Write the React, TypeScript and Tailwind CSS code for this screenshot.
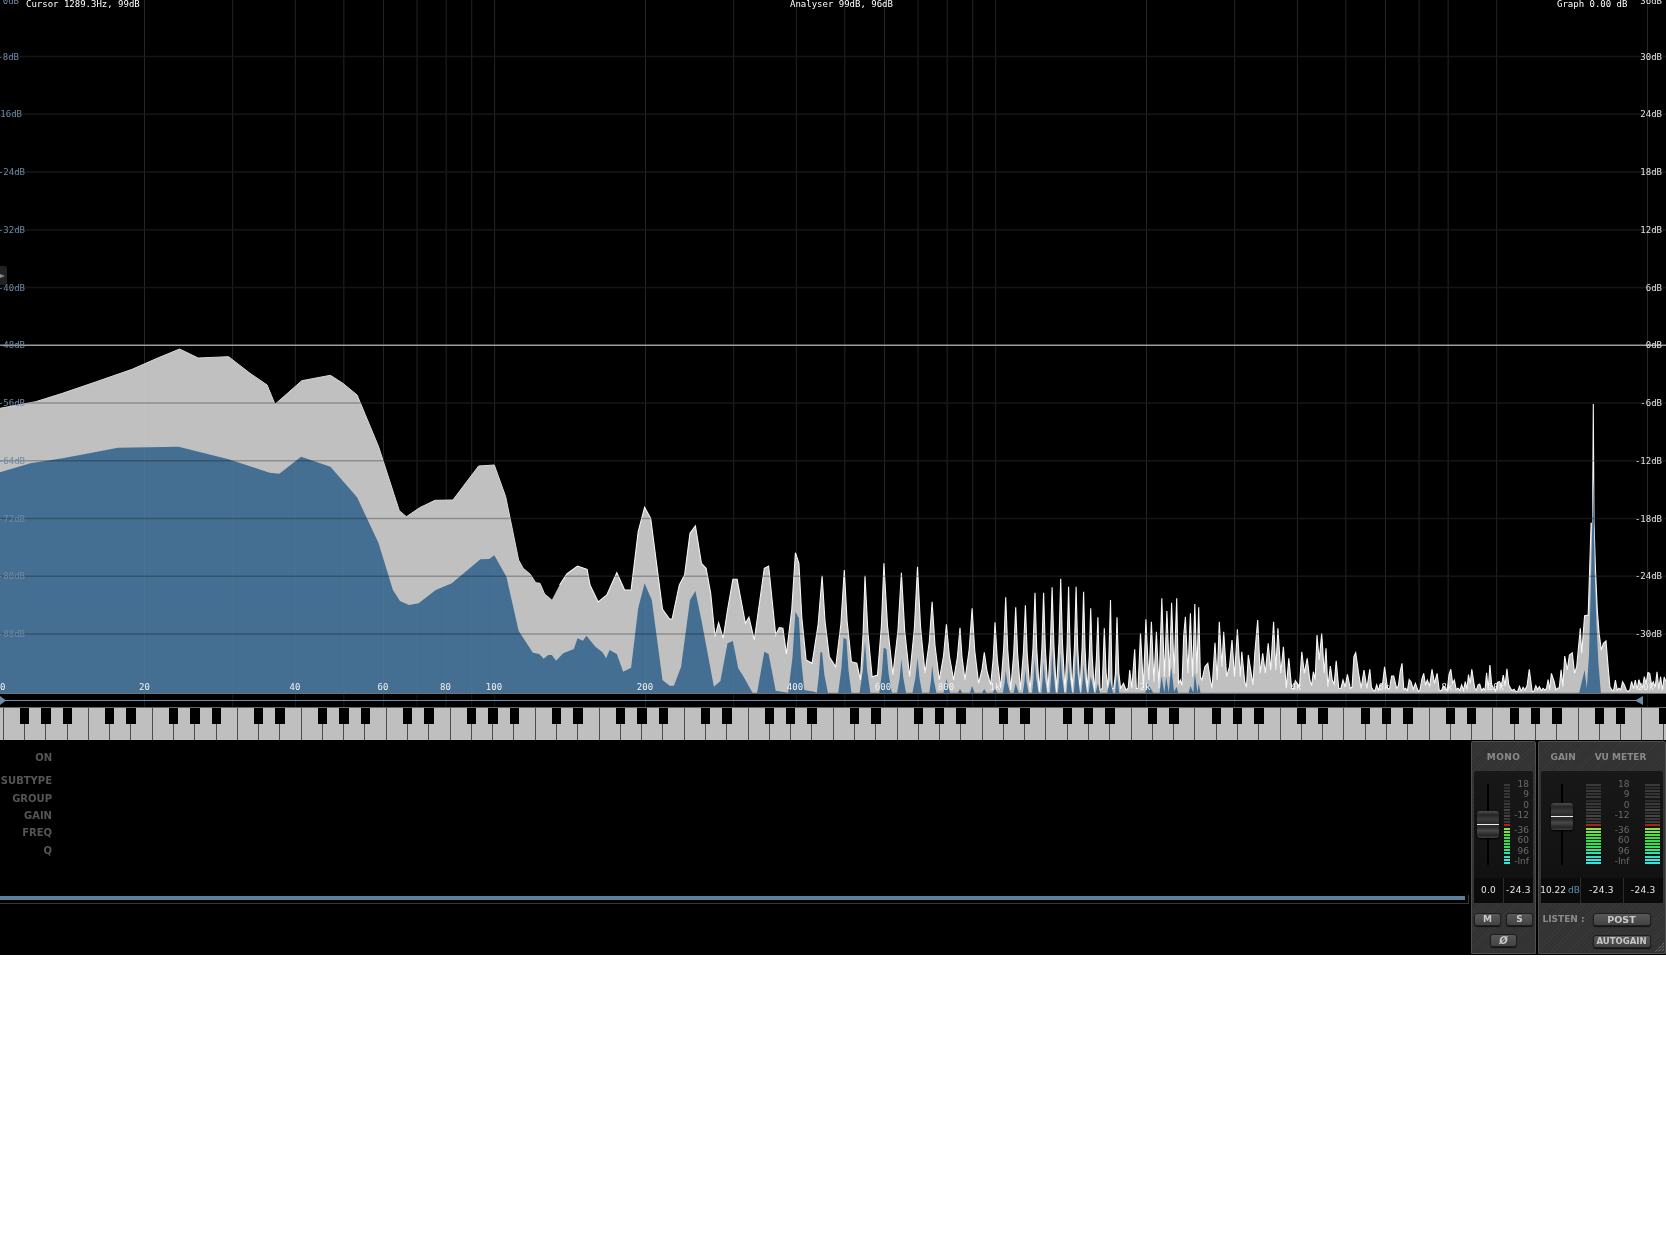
import React from "react";

// traced from crops of the spectrum: each run has its own offset and scale
type Pt = [number, number];
const run = (pts: Pt[], ox: number, oy: number, sx: number) =>
  pts.map(([x, y]) => `${(ox + x / sx).toFixed(1)},${(oy + y / 3).toFixed(1)}`);

// bell-shaped flanks: add a midpoint pulled towards the higher end of each steep segment
const sharpen = (pts: Pt[]) => {
  const out: Pt[] = [];
  pts.forEach((p, i) => {
    out.push(p);
    const q = pts[i + 1];
    if (!q || p[0] < 690 || Math.abs(q[1] - p[1]) < 60) return;
    const [hi, lo] = p[1] < q[1] ? [p, q] : [q, p];
    out.push([hi[0] + (lo[0] - hi[0]) * 0.4, (p[1] + q[1]) / 2 + Math.abs(q[1] - p[1]) * 0.06]);
  });
  return out;
};

// comb of fine noise between traced peaks of the top octaves
const comb = (pts: Pt[], base: number) => {
  const out: Pt[] = [];
  pts.forEach((p, i) => {
    out.push(p);
    const q = pts[i + 1];
    if (!q || q[0] - p[0] < 9 || (p[0] > 1300 && p[0] < 1400)) return;
    const steps = Math.floor((q[0] - p[0]) / 4.5);
    for (let s = 1; s < steps; s++) {
      const t = s / steps;
      const env = p[1] + (q[1] - p[1]) * t;
      const r = Math.abs(Math.sin((p[0] + s) * 12.9898) * 43758.5453) % 1;
      const y = s % 2 ? env + (base - env) * (0.45 + r * 0.5) : env - r * 14;
      out.push([p[0] + (q[0] - p[0]) * t, Math.min(y, base)]);
    }
  });
  return out;
};

const whiteLow: Pt[] = [[0,205],[100,185],[175,160],[270,125],[370,88],[440,55],[503,27],[555,54],[640,50],[700,100],[748,135],[770,193],[845,122],[925,106],[960,130],[1000,165],[1060,320],[1118,512],[1138,530],[1175,503],[1218,481],[1268,480],[1340,378],[1384,375],[1416,470],[1452,660],[1465,685],[1485,703],[1500,728],[1512,730],[1525,762],[1545,780]];
const whiteMid: Pt[] = [[55,315],[75,282],[105,258],[132,268],[140,315],[163,366],[187,345],[215,278],[237,330],[255,330],[275,155],[293,82],[310,115],[325,240],[343,388],[363,417],[370,417],[390,315],[405,285],[420,160],[435,138],[452,250],[465,265],[478,340],[490,470],[500,428],[513,475],[525,390],[540,298],[552,298],[575,430],[585,412],[600,480],[628,265],[640,258],[660,465],[670,443],[680,445],[690,522],[715,218],[725,250],[745,540],[762,550],[790,287],[810,530],[828,560],[852,270],[872,545],[887,550],[897,600],[910,287],[930,590],[945,585],[963,250],[988,585],[1012,278],[1035,590],[1057,260],[1078,580],[1098,365],[1118,600],[1138,433],[1158,600],[1176,443],[1190,600],[1210,385],[1228,610],[1244,517],[1262,615],[1274,427],[1290,625],[1304,352],[1318,630],[1332,382],[1345,630],[1359,376],[1372,635],[1386,338],[1398,635],[1410,338],[1422,635],[1434,322],[1446,635],[1458,296],[1470,635],[1480,320],[1490,635],[1501,320],[1512,635],[1522,335],[1532,635],[1542,385],[1552,635],[1562,412]];
const whiteHigh: Pt[] = [[0,930],[12,745],[22,925],[29,660],[38,925],[47,712],[57,925],[65,910],[78,925],[82,870],[88,925],[96,808],[105,925],[112,760],[120,925],[127,718],[135,900],[142,725],[149,905],[156,755],[163,925],[171,655],[178,890],[185,693],[192,890],[198,668],[205,880],[212,655],[222,900],[236,710],[243,880],[250,700],[256,890],[262,672],[268,880],[273,682],[282,900],[290,860],[298,850],[305,900],[310,925],[318,788],[324,900],[330,725],[337,860],[342,755],[350,890],[358,860],[365,780],[372,890],[380,748],[388,890],[392,815],[400,905],[410,825],[418,880],[428,820],[436,720],[443,880],[450,820],[457,880],[465,790],[472,870],[480,725],[486,870],[492,745],[500,880],[507,800],[515,925],[522,835],[530,925],[545,910],[558,815],[565,880],[573,835],[580,900],[590,875],[600,765],[606,840],[613,760],[620,880],[625,805],[630,920],[637,858],[642,900],[653,842],[660,925],[672,900],[684,883],[692,925],[702,830],[707,818],[715,880],[722,925],[730,870],[738,925],[746,868],[755,930],[775,915],[787,860],[795,925],[812,888],[820,925],[835,850],[845,925],[860,905],[872,910],[880,935],[895,880],[905,900],[918,868],[925,910],[932,880],[938,930],[955,925],[970,868],[980,900],[990,925],[1010,905],[1028,868],[1036,925],[1050,912],[1060,925],[1078,855],[1088,925],[1105,905],[1115,885],[1125,866],[1135,925],[1150,935],[1175,930],[1187,868],[1195,935],[1215,920],[1230,930],[1248,880],[1256,905],[1265,925],[1285,828],[1292,870],[1298,825],[1306,818],[1312,880],[1318,860],[1328,745],[1332,820],[1340,707],[1350,705],[1358,430],[1362,430],[1364,72],[1366,430],[1370,570],[1375,690],[1380,760],[1386,810],[1392,790],[1399,783],[1405,860],[1415,930],[1425,900],[1435,925],[1450,915],[1460,935],[1480,900],[1495,915],[1505,890],[1520,880],[1530,905],[1540,875],[1550,890],[1565,905]];

const blueLow: Pt[] = [[0,397],[85,370],[175,355],[250,340],[330,323],[500,320],[640,358],[755,398],[782,401],[843,350],[925,380],[1000,472],[1060,610],[1100,750],[1120,783],[1145,795],[1172,790],[1220,750],[1265,730],[1345,658],[1370,657],[1384,646],[1418,710],[1452,872],[1492,938],[1510,942],[1522,956],[1535,945],[1545,945],[1557,962]];
const blueMid: Pt[] = [[65,520],[95,507],[105,475],[120,482],[130,467],[155,500],[175,517],[185,535],[195,510],[215,522],[233,575],[255,563],[275,385],[293,310],[313,360],[343,600],[363,617],[375,617],[395,560],[420,360],[435,333],[452,420],[487,620],[505,603],[525,490],[540,483],[555,565],[570,590],[595,638],[608,638],[628,515],[640,522],[660,632],[695,638],[715,395],[725,415],[740,630],[768,635],[775,638],[785,517],[790,517],[806,638],[835,638],[850,473],[858,478],[872,638],[895,638],[910,483],[925,638],[950,638],[962,503],[970,507],[985,638],[1000,638],[1012,537],[1025,638],[1043,638],[1057,533],[1070,638],[1090,638],[1098,555],[1110,638],[1130,638],[1138,597],[1148,638],[1170,638],[1176,627],[1182,638],[1204,638],[1210,617],[1217,638],[1238,638],[1244,627],[1250,638],[1268,638],[1274,625],[1280,638],[1296,638],[1304,570],[1316,638],[1326,638],[1332,610],[1340,638],[1352,638],[1359,567],[1368,638],[1378,638],[1385,537],[1396,638],[1404,638],[1410,543],[1420,638],[1428,638],[1434,505],[1444,638],[1450,638],[1457,517],[1468,638],[1474,638],[1480,543],[1490,638],[1495,638],[1501,508],[1512,638],[1516,638],[1522,550],[1532,638],[1536,638],[1542,588],[1552,638],[1556,638],[1562,610],[1568,638]];
const blueHigh: Pt[] = [[20,938],[28,900],[36,938],[42,938],[47,880],[53,938],[125,938],[132,910],[147,938],[165,938],[170,888],[178,938],[183,890],[190,938],[197,860],[205,935],[212,920],[216,938],[245,938],[250,918],[258,938],[262,878],[270,938],[273,910],[278,938],[1325,938],[1340,870],[1346,925],[1352,825],[1358,585],[1364,290],[1368,585],[1373,740],[1378,850],[1385,938]];

// the low bumps have a soft edge, the narrow peaks a bright one
const softEdge = run(whiteLow, 0, 340, 2.8).join(" ");
const brightEdge = [...run(sharpen(whiteMid), 540, 480, 2.8), ...run(comb(whiteHigh, 934), 1100, 380, 2.765)].join(" ");
const whiteLine = `${softEdge} ${brightEdge}`;
const blueLine = [...run(blueLow, 0, 340, 2.8), ...run(sharpen(blueMid), 540, 480, 2.8), ...run(blueHigh, 1100, 380, 2.765)].join(" ");

const freqX = (f: number) => 144.5 + 501 * Math.log10(f / 20);
const gridFreqs = [20,30,40,50,60,70,80,90,100,200,300,400,500,600,700,800,900,1000,2000,3000,4000,5000,6000,7000,8000,10000,20000];
const freqLabels: [string, number][] = [["10",0],["20",144.5],["40",295],["60",383],["80",445.5],["100",494],["200",645],["400",795],["600",883],["800",946],["1k",995],["2k",1145],["4k",1296],["6k",1384],["8k",1447],["10k",1496],["20k",1646]];

const rowY = (i: number) => 56.5 + (i - 1) * 57.75;
const leftLabels = ["0dB","-8dB","-16dB","-24dB","-32dB","-40dB","-48dB","-56dB","-64dB","-72dB","-80dB","-88dB"];
const leftEnds = [19,19,22,25,25,25,25,25,25,25,25,25];
const rightLabels = ["36dB","30dB","24dB","18dB","12dB","6dB","0dB","-6dB","-12dB","-18dB","-24dB","-30dB"];

function Spectrum() {
  return (
    <svg width={1666} height={707} viewBox="0 0 1666 707" className="block font-['DejaVu_Sans_Mono',monospace]">
      {gridFreqs.map((f) => (
        <line key={f} x1={freqX(f)} x2={freqX(f)} y1={0} y2={693} stroke="#fff" strokeOpacity={0.12} />
      ))}
      {leftLabels.map((_, i) =>
        i === 0 || i === 6 ? null : (
          <line key={i} x1={0} x2={1666} y1={rowY(i)} y2={rowY(i)} stroke="#1b1b1b" strokeWidth={1.5} />
        )
      )}
      <polygon points={`0,693 ${whiteLine} 1666,693`} fill="#c0c0c0" />
      <polyline points={softEdge} fill="none" stroke="#d8d8d8" strokeWidth={1} />
      <polyline points={brightEdge} fill="none" stroke="#f6f6f6" strokeWidth={1.1} />
      <polygon points={`0,693 ${blueLine} 1666,693`} fill="#446f92" />
      {gridFreqs.map((f) => (
        <line key={f} x1={freqX(f)} x2={freqX(f)} y1={0} y2={693} stroke="#fff" strokeOpacity={0.03} />
      ))}
      {leftLabels.map((_, i) =>
        i === 0 || i === 6 ? null : (
          <line key={i} x1={0} x2={1666} y1={rowY(i)} y2={rowY(i)} stroke="#2a2a2a" strokeOpacity={0.31} strokeWidth={1.5} style={{ mixBlendMode: "multiply" }} />
        )
      )}
      <line x1={0} x2={1666} y1={rowY(6)} y2={rowY(6)} stroke="#9c9c9c" strokeWidth={1.5} />
      {leftLabels.map((t, i) => (
        <text key={t} x={leftEnds[i]} y={i === 0 ? 1 : rowY(i)} textAnchor="end" dominantBaseline="central" fontSize={9} fill="#6d8aa6">{t}</text>
      ))}
      {rightLabels.map((t, i) => (
        <text key={t} x={1662} y={i === 0 ? 1 : rowY(i)} textAnchor="end" dominantBaseline="central" fontSize={9} fill="#e4e4e4">{t}</text>
      ))}
      {freqLabels.map(([t, x]) => (
        <text key={t} x={x} y={687} textAnchor="middle" dominantBaseline="central" fontSize={9} fill="#f2f2f2">{t}</text>
      ))}
      <text x={26} y={4} dominantBaseline="central" fontSize={9} fill="#fff">Cursor 1289.3Hz, 99dB</text>
      <text x={790} y={4} dominantBaseline="central" fontSize={9} fill="#fff">Analyser 99dB, 96dB</text>
      <text x={1557} y={4} dominantBaseline="central" fontSize={9} fill="#fff">Graph 0.00 dB</text>
      <rect x={0} y={693} width={1666} height={14} fill="#000" />
      {gridFreqs.map((f) => (
        <line key={f} x1={freqX(f)} x2={freqX(f)} y1={694} y2={707} stroke="#fff" strokeOpacity={0.1} />
      ))}
      <line x1={0} x2={1666} y1={693.5} y2={693.5} stroke="#727272" />
      <line x1={0} x2={1640} y1={700.5} y2={700.5} stroke="#6b8cab" />
      <polygon points="0,696 0,705 6,700.5" fill="#6b8cab" />
      <polygon points="1643,696 1643,705 1635,700.5" fill="#6b8cab" />
    </svg>
  );
}

// first visible edge has no black key, then 3 blacks, a gap, 2 blacks, a gap
const hasBlack = [false, true, true, true, false, true, true];

function Keyboard() {
  const keys = Array.from({ length: 80 }, (_, i) => i);
  return (
    <div className="h-[33px] overflow-hidden border-t border-[#666] bg-black">
      <div className="flex h-[32px] -ml-[17.6px] w-[1720px]">
        {keys.map((i) => (
          <div key={i} className="relative h-full w-[21.29px] shrink-0 border-r-[1.5px] border-[#4c4c4c] bg-[#bfbfbf]">
            {hasBlack[i % 7] && <div className="absolute -right-[5.4px] top-0 z-10 h-[16px] w-[9.3px] bg-black" />}
          </div>
        ))}
      </div>
    </div>
  );
}

const segments = [
  "bg-[#3a3a3a]","bg-[#2e2e2e]","bg-[#3a3a3a]","bg-[#333333]","bg-[#3a3a3a]","bg-[#2e2e2e]","bg-[#3a3a3a]","bg-[#333333]","bg-[#444444]","bg-[#333333]","bg-[#444444]","bg-[#3a3a3a]","bg-[#3a3a3a]",
  "bg-[#a82222]",
  "bg-[#8fe23c]","bg-[#7fe23c]","bg-[#4fe23c]",
  "bg-[#2ee244]","bg-[#2ee244]","bg-[#2ee244]","bg-[#2ee25a]",
  "bg-[#2ee28c]","bg-[#2ee2a8]","bg-[#2ee2c4]","bg-[#2ee8d8]","bg-[#2ee8e0]",
];

function Meter({ wide }: { wide?: boolean }) {
  return (
    <div className={wide ? "flex h-[80px] w-[15px] shrink-0 flex-col justify-between" : "flex h-[80px] w-[5.5px] shrink-0 flex-col justify-between"}>
      {segments.map((c, i) => (
        <div key={i} className={`h-[2px] ${c}`} />
      ))}
    </div>
  );
}

function Scale() {
  const rows = ["18", "9", "0", "-12", "-36", "60", "96", "-Inf"];
  return (
    <div className="-mt-[5px] flex flex-col items-end font-['DejaVu_Sans',sans-serif] text-[9px] leading-[10.4px] text-[#6a6a6a]">
      {rows.map((t) => (
        <div key={t} className={t === "-36" ? "mt-[4.5px] h-[10.4px]" : "h-[10.4px]"}>{t}</div>
      ))}
    </div>
  );
}

function Fader({ top }: { top: string }) {
  return (
    <div className="relative flex h-[81px] w-[22px] shrink-0 justify-center">
      <div className="h-full w-[2px] bg-black" />
      <div className={`absolute left-0 flex h-[27px] w-[22px] items-center rounded-[3px] bg-[linear-gradient(#4e4e4e,#262626_14%,#3a3a3a_30%,#2a2a2a_46%,#2a2a2a_60%,#484848_72%,#262626_90%,#3e3e3e)] shadow-[0_1px_2px_#000] ${top}`}>
        <div className="h-[1.5px] w-full bg-[#eeeeee]" />
      </div>
    </div>
  );
}

function Readout({ className, children }: { className: string; children: React.ReactNode }) {
  return (
    <div className={`flex items-center justify-center whitespace-nowrap font-['DejaVu_Sans',sans-serif] text-[9px] tracking-[0.3px] text-[#e8e8e8] ${className}`}>
      {children}
    </div>
  );
}

function Btn({ className, children }: { className: string; children: React.ReactNode }) {
  return (
    <div className={`flex h-[13px] items-center justify-center rounded-[3px] border border-[#1e1e1e] bg-[linear-gradient(#585858,#434343)] font-['DejaVu_Sans',sans-serif] font-bold text-[#c8c8c8] shadow-[0_1px_1px_#111] ${className}`}>
      {children}
    </div>
  );
}

const panel = "relative flex h-[213px] shrink-0 flex-col rounded-t-[2px] border border-[#4e4e4e] bg-[repeating-linear-gradient(135deg,#383838_0px,#383838_1px,#323232_1px,#323232_3px)]";
const title = "font-['DejaVu_Sans',sans-serif] text-[9px] font-bold text-[#8a8a8a]";
const display = "flex flex-col rounded-[2px] bg-[linear-gradient(#181818,#101010)]";

function MonoPanel() {
  return (
    <div className={`${panel} ml-[5px] w-[65px]`}>
      <div className="flex h-[29px] items-center justify-center pt-[3px]">
        <span className={`${title} tracking-[0.4px]`}>MONO</span>
      </div>
      <div className={`${display} mx-[2px] h-[132px]`}>
        <div className="flex h-[107px] items-start pl-[3px] pr-[4px] pt-[13px]">
          <Fader top="top-[27px]" />
          <div className="ml-[5px]"><Meter /></div>
          <div className="flex-1"><Scale /></div>
        </div>
        <div className="flex h-[25px] bg-[#0b0b0b]">
          <Readout className="w-[30px] border-r border-[#2c2c2c]">0.0</Readout>
          <Readout className="flex-1">-24.3</Readout>
        </div>
      </div>
      <div className="mx-[2px] mt-[10px] flex justify-between">
        <Btn className="w-[27px] text-[9px]">M</Btn>
        <Btn className="w-[27px] text-[9px]">S</Btn>
      </div>
      <div className="mt-[8px] flex justify-center">
        <Btn className="w-[27px] text-[10px] italic">Ø</Btn>
      </div>
    </div>
  );
}

function MainPanel() {
  return (
    <div className={`${panel} ml-[1.5px] w-[128.5px]`}>
      <div className="flex h-[29px] items-center pt-[3px]">
        <span className={`${title} ml-[12px] w-[24px] text-center`}>GAIN</span>
        <span className={`${title} ml-[20px] w-[52px] whitespace-nowrap text-center`}>VU METER</span>
      </div>
      <div className={`${display} mx-[2px] h-[132px]`}>
        <div className="flex h-[107px] items-start pl-[10px] pt-[13px]">
          <Fader top="top-[19px]" />
          <div className="ml-[13px]"><Meter wide /></div>
          <div className="w-[29px]"><Scale /></div>
          <div className="ml-[15px]"><Meter wide /></div>
        </div>
        <div className="flex h-[25px] bg-[#0b0b0b]">
          <Readout className="w-[40px] border-r border-[#2c2c2c] tracking-normal">
            10.22<span className="ml-[2px] text-[#5f8fb5]">dB</span>
          </Readout>
          <Readout className="w-[43px] border-r border-[#2c2c2c]">-24.3</Readout>
          <Readout className="flex-1">-24.3</Readout>
        </div>
      </div>
      <div className="ml-[4px] mt-[10px] flex items-center">
        <span className={`${title} w-[50px] whitespace-nowrap`}>LISTEN :</span>
        <Btn className="w-[58px] text-[9.5px]">POST</Btn>
      </div>
      <div className="ml-[54px] mt-[8px]">
        <Btn className="w-[58px] text-[8.5px]">AUTOGAIN</Btn>
      </div>
      <svg width={12} height={12} viewBox="0 0 12 12" className="absolute bottom-0 right-0">
        <path d="M11 2 2 11M11 5 5 11M11 8 8 11" stroke="#8a8a8a" strokeWidth={1} strokeDasharray="1 1" />
      </svg>
    </div>
  );
}

function FilterArea() {
  const labels = [
    ["ON", "mb-[10px]"],
    ["SUBTYPE", "mb-[4.5px]"],
    ["GROUP", "mb-[4.5px]"],
    ["GAIN", "mb-[4px]"],
    ["FREQ", "mb-[4.5px]"],
    ["Q", ""],
  ];
  return (
    <div className="w-[1466px] shrink-0 pt-[10px]">
      <div className="flex w-[52px] flex-col items-end font-['DejaVu_Sans',sans-serif] text-[10px] font-bold leading-[13px] text-[#555555]">
        {labels.map(([t, c]) => (
          <div key={t} className={c}>{t}</div>
        ))}
      </div>
      <div className="mt-[38px] flex h-[9px] w-[1469px] items-start border-b border-r border-[#3a3a3a] pr-[3px] pt-[1px]">
        <div className="h-[4.5px] w-full bg-[#5b7f9b]" />
      </div>
    </div>
  );
}

export default function App() {
  return (
    <div className="relative h-[955px] w-[1666px] overflow-hidden bg-black">
      <Spectrum />
      <Keyboard />
      <div className="flex h-[215px] pt-[1px]">
        <FilterArea />
        <MonoPanel />
        <MainPanel />
      </div>
      {/* small side handle sitting over the graph */}
      <div className="absolute left-0 top-[266px] flex h-[19px] w-[7px] items-center rounded-r-[3px] bg-[#222222]">
        <svg width={6} height={6} viewBox="0 0 6 6">
          <path d="M0 1 5 3 0 5Z" fill="#8a8a8a" />
        </svg>
      </div>
    </div>
  );
}
